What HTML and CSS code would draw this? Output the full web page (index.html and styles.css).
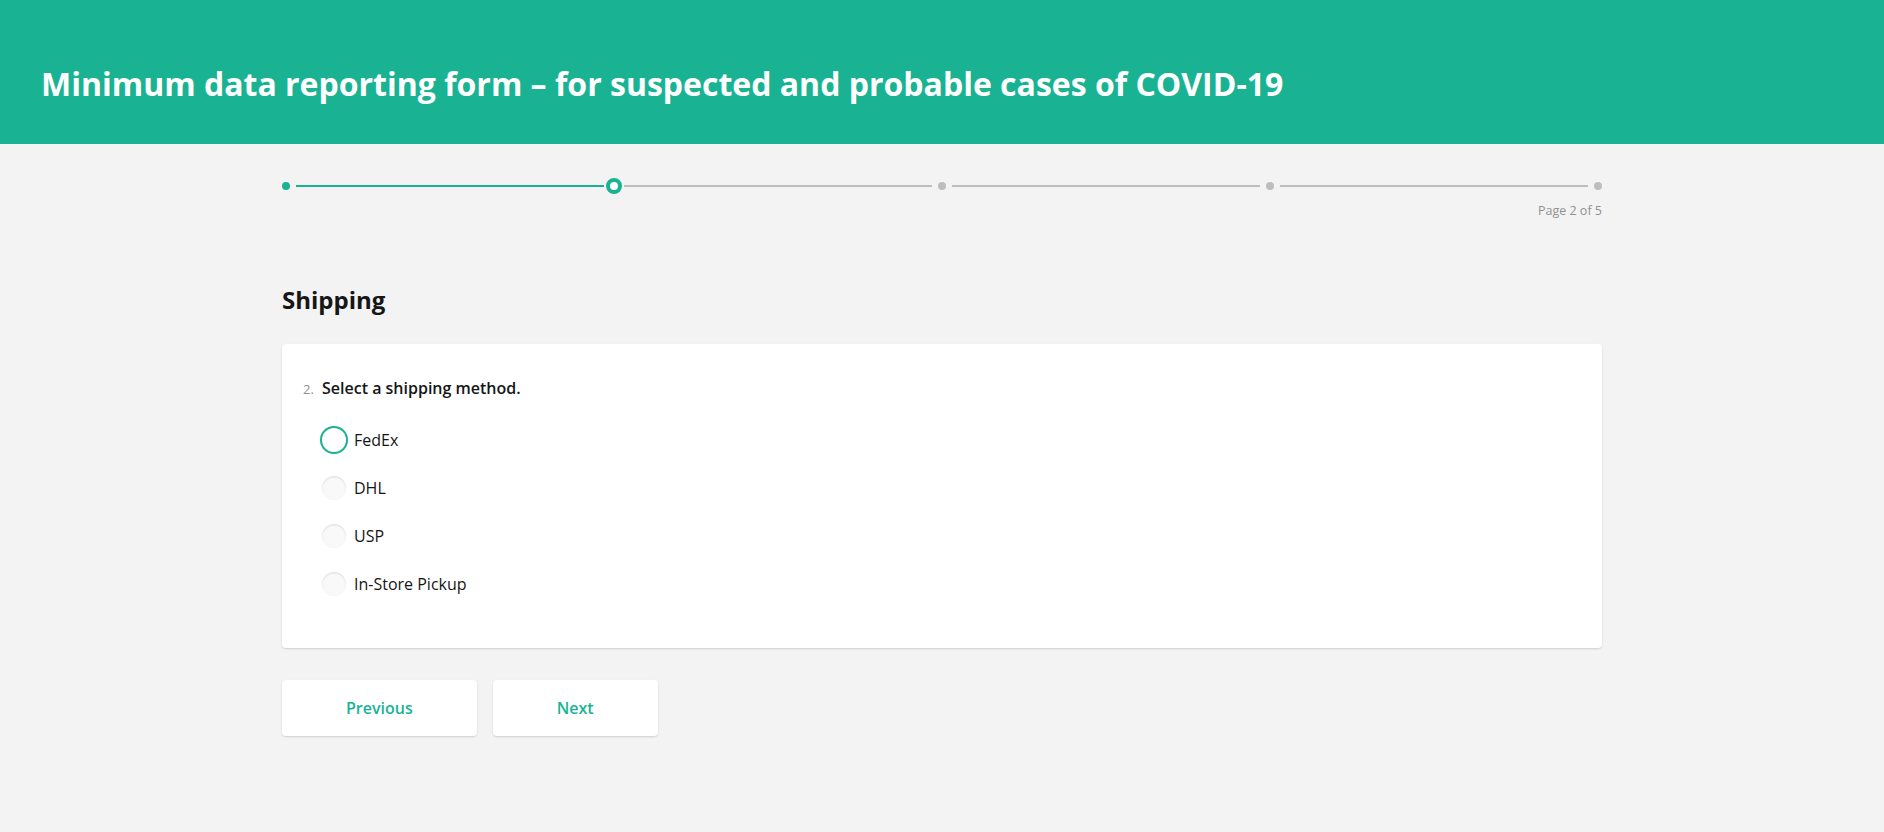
FILE: index.html
```html
<!DOCTYPE html>
<html lang="en">
<head>
<meta charset="utf-8">
<title>Minimum data reporting form</title>
<link rel="stylesheet" href="styles.css">
</head>
<body>
<header class="header">
  <h1 class="title">Minimum data reporting form – for suspected and probable cases of COVID-19</h1>
</header>
<main class="container">
  <div class="progress">
    <div class="steps">
      <span class="node"><span class="dot dot-done"></span></span>
      <span class="seg"><span class="line line-done"></span></span>
      <span class="node"><span class="ring"></span></span>
      <span class="seg"><span class="line"></span></span>
      <span class="node"><span class="dot"></span></span>
      <span class="seg"><span class="line"></span></span>
      <span class="node"><span class="dot"></span></span>
      <span class="seg"><span class="line"></span></span>
      <span class="node"><span class="dot"></span></span>
    </div>
    <div class="page-info">Page 2 of 5</div>
  </div>
  <h2 class="page-title">Shipping</h2>
  <section class="card">
    <div class="question-title">
      <span class="q-num">2.</span>
      <span class="q-text">Select a shipping method.</span>
    </div>
    <div class="options">
      <label class="option"><span class="radio radio-focus"></span><span class="opt-label">FedEx</span></label>
      <label class="option"><span class="radio"></span><span class="opt-label">DHL</span></label>
      <label class="option"><span class="radio"></span><span class="opt-label">USP</span></label>
      <label class="option"><span class="radio"></span><span class="opt-label">In-Store Pickup</span></label>
    </div>
  </section>
  <div class="nav">
    <button class="btn btn-prev">Previous</button>
    <button class="btn btn-next">Next</button>
  </div>
</main>
</body>
</html>
```
FILE: styles.css
```css
* { box-sizing: border-box; }
html, body { margin: 0; padding: 0; }
body {
  background: #f3f3f3;
  font-family: "Open Sans", "Liberation Sans", sans-serif;
  color: #161616;
  min-height: 832px;
}
.header {
  background: #19b394;
  height: 144px;
  padding: 64px 41px 0;
}
.title {
  margin: 0;
  color: #fff;
  font-size: 32px;
  font-weight: 700;
  line-height: 40px;
}
.container {
  width: 1320px;
  margin: 0 auto;
}
.progress {
  padding-top: 34px;
}
.steps {
  display: flex;
  align-items: center;
  height: 16px;
}
.node {
  width: 8px;
  height: 16px;
  flex: none;
  display: flex;
  align-items: center;
  justify-content: center;
}
.dot {
  width: 8px;
  height: 8px;
  border-radius: 50%;
  background: #bdbdbd;
  flex: none;
}
.dot-done { background: #19b394; }
.ring {
  width: 16px;
  height: 16px;
  border-radius: 50%;
  border: 4px solid #19b394;
  background: #fff;
  flex: none;
}
.seg {
  flex: 1;
  padding: 0 6px;
  display: flex;
  align-items: center;
}
.line {
  flex: 1;
  height: 2px;
  background: #bdbdbd;
}
.line-done { background: #19b394; }
.page-info {
  margin-top: 9px;
  text-align: right;
  font-size: 12.5px;
  line-height: 16px;
  color: #909090;
}
.page-title {
  margin: 65px 0 0;
  font-size: 24px;
  font-weight: 700;
  line-height: 32px;
}
.card {
  margin-top: 28px;
  background: #fff;
  border-radius: 4px;
  box-shadow: 0 1px 2px rgba(0, 0, 0, 0.15);
  padding: 32px 40px 40px 21px;
}
.question-title {
  display: flex;
  align-items: baseline;
  height: 24px;
  line-height: 24px;
}
.q-num {
  width: 19px;
  font-size: 13px;
  line-height: 16px;
  color: #909090;
}
.q-text {
  font-size: 16px;
  font-weight: 600;
}
.options {
  margin-top: 16px;
  padding-left: 19px;
}
.option {
  display: flex;
  align-items: center;
  height: 48px;
}
.radio {
  width: 24px;
  height: 24px;
  border-radius: 50%;
  background: #f9f9f9;
  box-shadow: inset 0 1px 2px rgba(0, 0, 0, 0.12);
  flex: none;
}
.radio-focus {
  background: #fff;
  box-shadow: 0 0 0 2px #19b394;
}
.opt-label {
  margin-left: 8px;
  font-size: 16px;
  line-height: 24px;
}
.nav {
  display: flex;
  gap: 16px;
  margin-top: 32px;
}
.btn {
  font-family: inherit;
  font-size: 16px;
  font-weight: 600;
  line-height: 24px;
  color: #19b394;
  background: #fff;
  border: none;
  border-radius: 4px;
  box-shadow: 0 1px 2px rgba(0, 0, 0, 0.15);
  height: 56px;
  padding: 0 64px;
  cursor: pointer;
}
```
